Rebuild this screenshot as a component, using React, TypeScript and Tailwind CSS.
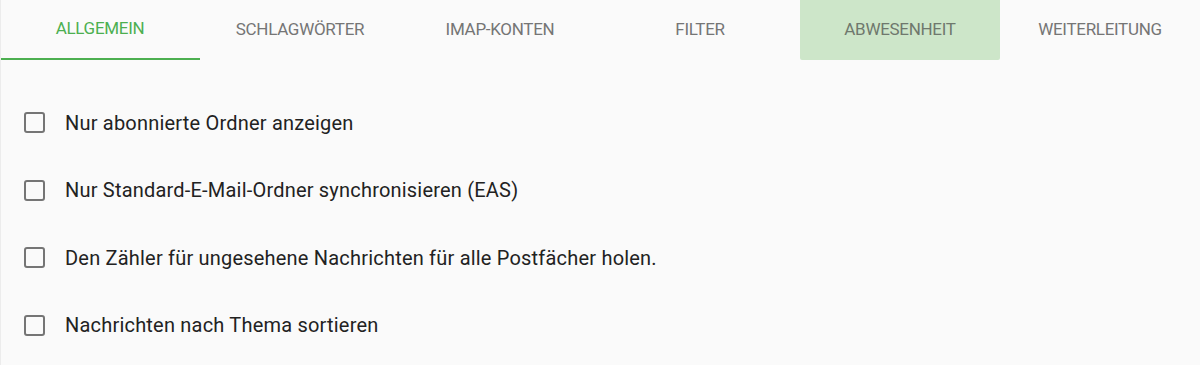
import React from 'react';

const tabs = ['Allgemein', 'Schlagwörter', 'IMAP-Konten', 'Filter', 'Abwesenheit', 'Weiterleitung'];

const options = [
  'Nur abonnierte Ordner anzeigen',
  'Nur Standard-E-Mail-Ordner synchronisieren (EAS)',
  'Den Zähler für ungesehene Nachrichten für alle Postfächer holen.',
  'Nachrichten nach Thema sortieren',
];

const App: React.FC = () => {
  return (
    <div
      className="w-[1200px] h-[365px] bg-[#fafafa] border-l border-[#ececec] overflow-hidden"
      style={{ fontFamily: 'Roboto, "Noto Sans", sans-serif' }}
    >
      {/* Tabs */}
      <div className="flex h-[60px] -ml-px">
        {tabs.map((t, i) => (
          <div
            key={t}
            className={
              i === 0
                ? 'w-[200px] flex items-center justify-center border-b-2 border-[#4caf50] text-[#4caf50] text-[17px] tracking-[-0.3px] uppercase'
                : i === 4
                ? 'w-[200px] flex items-center justify-center bg-[#cde6c9] rounded-b-[2px] text-[#6f786d] text-[17px] tracking-[-0.3px] uppercase'
                : 'w-[200px] flex items-center justify-center text-[#757575] text-[17px] tracking-[-0.3px] uppercase'
            }
          >
            {t}
          </div>
        ))}
      </div>

      {/* Options */}
      <div className="flex flex-col pt-[29px]">
        {options.map((o) => (
          <label key={o} className="flex items-center h-[67.5px] pl-[23px] cursor-pointer">
            <span className="w-[21px] h-[21px] border-2 border-[#757575] rounded-[3px] shrink-0" />
            <span className="ml-[20px] text-[20px] tracking-[0.2px] text-[#222222]">{o}</span>
          </label>
        ))}
      </div>
    </div>
  );
};

export default App;
